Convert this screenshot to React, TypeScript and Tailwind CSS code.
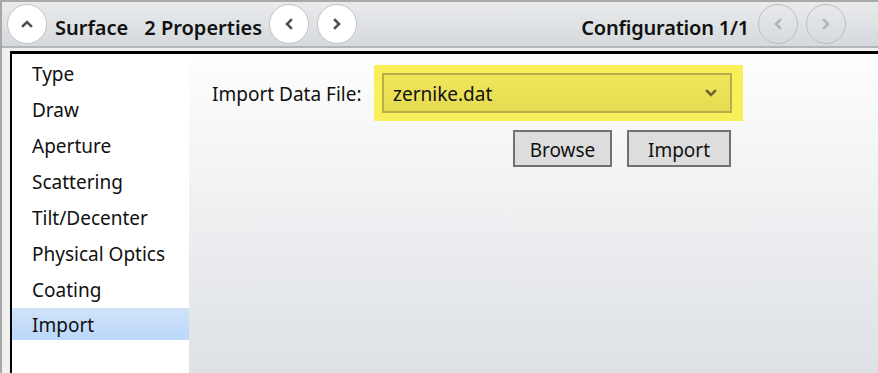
import React from "react";

const font = { fontFamily: '"Noto Sans", "Open Sans", sans-serif' };

function Chevron({ dir, color }: { dir: "up" | "left" | "right" | "down"; color: string }) {
  const d =
    dir === "up"
      ? "M3 9 L7 5 L11 9"
      : dir === "down"
      ? "M3 5 L7 9 L11 5"
      : dir === "left"
      ? "M9 3 L5 7 L9 11"
      : "M5 3 L9 7 L5 11";
  return (
    <svg width="14" height="14" viewBox="0 0 14 14">
      <path d={d} fill="none" stroke={color} strokeWidth="2.6" strokeLinecap="square" strokeLinejoin="miter" />
    </svg>
  );
}

function CircleBtn({ dir, disabled }: { dir: "up" | "left" | "right"; disabled?: boolean }) {
  return (
    <div
      className={
        disabled
          ? "w-[40px] h-[40px] rounded-full border border-[#bdbdbd] flex items-center justify-center shrink-0"
          : "w-[40px] h-[40px] rounded-full border border-[#c4c4c4] bg-white flex items-center justify-center shrink-0"
      }
    >
      <Chevron dir={dir} color={disabled ? "#b4b4b4" : "#505050"} />
    </div>
  );
}

const items = ["Type", "Draw", "Aperture", "Scattering", "Tilt/Decenter", "Physical Optics", "Coating", "Import"];

export default function App() {
  return (
    <div
      className="w-[878px] h-[373px] flex flex-col bg-[#eeeff1] border-l-2 border-[#a7a7a7] overflow-hidden text-[#111]"
      style={font}
    >
      <div className="h-[48px] shrink-0 border-t-2 border-b-2 border-t-[#a9a9a9] border-b-[#b3b6b9] bg-gradient-to-b from-[#e9ebed] to-[#d6d9dc] flex items-center pl-[5px] pr-[32px]">
        <CircleBtn dir="up" />
        <span className="ml-[8px] mt-[7px] text-[20px] font-semibold leading-none">Surface</span>
        <span className="ml-[16px] mt-[7px] text-[20px] font-semibold leading-none">2 Properties</span>
        <div className="ml-[7px] flex gap-[8px]">
          <CircleBtn dir="left" />
          <CircleBtn dir="right" />
        </div>
        <div className="flex-1" />
        <span className="text-[20px] mt-[7px] font-semibold leading-none mr-[9px] tracking-[-0.2px]">Configuration 1/1</span>
        <div className="flex gap-[8px]">
          <CircleBtn dir="left" disabled />
          <CircleBtn dir="right" disabled />
        </div>
      </div>
      <div className="flex-1 flex pt-[3px] pl-[8px] bg-[#f1f1f1]">
        <div className="flex-1 flex border-l-2 border-t-[3px] border-black">
          <div className="w-[177px] bg-white pt-[2px] flex flex-col">
            {items.map((it) => (
              <div
                key={it}
                className={
                  it === "Import"
                    ? "h-[32px] flex items-center pl-[20px] pt-[2px] text-[19px] bg-gradient-to-b from-[#d0e3f9] to-[#bad7fb]"
                    : "h-[36px] flex items-center pl-[20px] text-[19px]"
                }
              >
                {it}
              </div>
            ))}
          </div>
          <div className="flex-1 bg-gradient-to-b from-[#fefefe] to-[#dee1e5] pl-[23px] pt-[11px]">
            <div className="flex items-center">
              <span className="text-[19px] w-[162px] pt-[3px]">Import Data File:</span>
              <div className="w-[369px] h-[56px] bg-[#f9ef5a] p-[8px] pr-[11px]">
                <div className="h-full border-2 border-[#b8ad4a] bg-gradient-to-b from-[#efe65c] to-[#e6dc52] flex items-center pl-[9px] pr-[12px]">
                  <span className="text-[19px] flex-1 pt-[3px]">zernike.dat</span>
                  <Chevron dir="down" color="#6a6430" />
                </div>
              </div>
            </div>
            <div className="flex ml-[301px] mt-[9px] gap-[15px]">
              <div className="w-[99px] h-[37px] border-2 border-[#717171] bg-[#dddddd] flex items-center justify-center pt-[4px] text-[19px]">
                Browse
              </div>
              <div className="w-[104px] h-[37px] border-2 border-[#717171] bg-[#dddddd] flex items-center justify-center pt-[4px] text-[19px]">
                Import
              </div>
            </div>
          </div>
        </div>
      </div>
    </div>
  );
}
